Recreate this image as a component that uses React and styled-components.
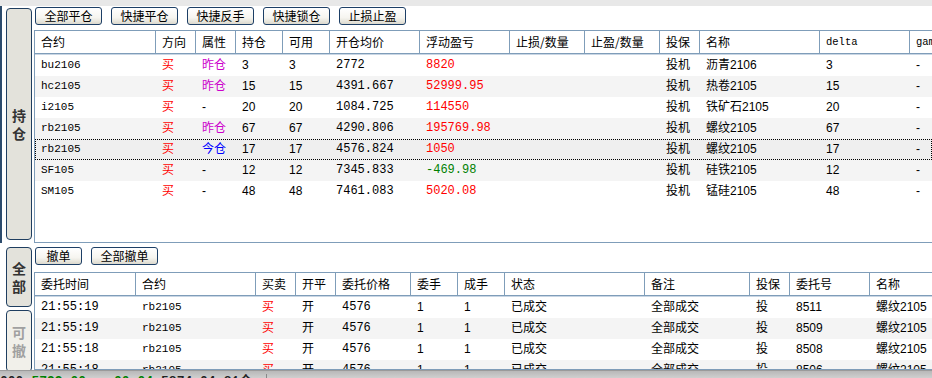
import styled, { createGlobalStyle } from "styled-components";

const GlobalStyle = createGlobalStyle`
  html, body { margin: 0; padding: 0; background: #fff; }
  body { font-family: "Liberation Sans", "Noto Sans CJK SC", sans-serif; font-size: 12px; color: #000; }
`

const Screen = styled.div`
  width: 932px;
  height: 378px;
  overflow: hidden;
  display: flex;
  flex-direction: column;
  background: #fff;
`
const TopStrip = styled.div`
  height: 6px;
  flex: none;
  background: #e8e8e8;
`
const Section = styled.div`
  display: flex;
  height: ${p => p.$h}px;
  flex: none;
  overflow: hidden;
`
const TabCol = styled.div`
  width: 34px;
  flex: none;
  box-sizing: border-box;
  display: flex;
  flex-direction: column;
  gap: 3px;
  padding: ${p => p.$pad};
  border-left: ${p => p.$edge ? "2px solid #2c4b6c" : "none"};
`
const Tab = styled.div`
  width: 26px;
  height: ${p => p.$h}px;
  flex: none;
  box-sizing: border-box;
  border: 1px solid #1f3e60;
  border-radius: 4px;
  background: ${p => p.$active ? "#e3e2db" : "#f1f0ea"};
  display: flex;
  flex-direction: column;
  align-items: center;
  justify-content: center;
  font-family: "Noto Sans CJK SC", sans-serif;
  font-weight: 700;
  font-size: 14px;
  line-height: 18px;
  color: ${p => p.$active ? "#333" : "#a0a0a0"};
`
const Panel = styled.div`
  flex: 1;
  min-width: 0;
  display: flex;
  flex-direction: column;
`
const Toolbar = styled.div`
  height: ${p => p.$h}px;
  flex: none;
  box-sizing: border-box;
  padding: ${p => p.$top}px 0 0 1px;
  display: flex;
  align-items: flex-start;
  gap: ${p => p.$gap}px;
`
const Btn = styled.button`
  width: ${p => p.$w}px;
  height: 18px;
  box-sizing: border-box;
  padding: 0;
  margin: 0;
  border: 1px solid #1d3f66;
  border-radius: 3px;
  background: linear-gradient(to bottom, #ffffff 0%, #f6f5f0 60%, #dcd9cd 100%);
  font-family: "Noto Sans CJK SC", sans-serif;
  font-size: 12px;
  line-height: 16px;
  color: #000;
`
const TableBox = styled.div`
  height: ${p => p.$h}px;
  flex: none;
  box-sizing: border-box;
  border: 1px solid #7f9db9;
  border-right: none;
  overflow: hidden;
  background: #fff;
`
const HeadRow = styled.div`
  display: flex;
  height: 22px;
  border-bottom: 1px solid #7f9db9;
  box-shadow: 0 1px 0 #c9d6e4;
  white-space: nowrap;
`
const HeadCell = styled.div`
  width: ${p => p.$w}px;
  flex: none;
  box-sizing: border-box;
  padding-left: 6px;
  border-right: 1px solid #7f9db9;
  line-height: 22px;
  overflow: hidden;
  font-family: ${p => p.$mono ? '"Liberation Mono", monospace' : '"Noto Sans CJK SC", sans-serif'};
  font-size: ${p => p.$mono ? "10.5px" : "12px"};
`
const Row = styled.div`
  display: flex;
  height: 21px;
  white-space: nowrap;
  background: ${p => p.$sel ? "#efefef" : p.$alt ? "#f4f4f4" : "#fff"};
  outline: ${p => p.$sel ? "1px dotted #000" : "none"};
  outline-offset: -1px;
  margin-top: ${p => p.$first ? "1px" : "0"};
`
const fonts = {
  code: '"Liberation Mono", monospace',
  mono: '"Liberation Mono", monospace',
  sans: '"Liberation Sans", "Noto Sans CJK SC", sans-serif',
}
const Cell = styled.div`
  width: ${p => p.$w}px;
  flex: none;
  box-sizing: border-box;
  padding-left: 6px;
  line-height: 21px;
  overflow: hidden;
  font-family: ${p => fonts[p.$kind || "sans"]};
  font-size: ${p => p.$kind === "code" ? "11px" : "12px"};
  color: ${p => p.$c || "#000"};
`
const StatusBar = styled.div`
  flex: 1;
  background: linear-gradient(to bottom, #b8b8b8, #cfcfcf);
  border-top: 1px solid #9a9a9a;
  overflow: hidden;
  display: flex;
  gap: 8px;
  padding: 3px 0 0 0;
  font-family: "Liberation Mono", "Noto Sans CJK SC", monospace;
  font-weight: 700;
  font-size: 13px;
  line-height: 16px;
  white-space: nowrap;
`
const StatusText = styled.span`
  color: ${p => p.$c || "#222"};
  margin-left: ${p => p.$ml || 0}px;
`
const StatusSep = styled.span`
  width: 1px;
  height: 10px;
  background: #888;
  margin-left: 6px;
`

const RED = "#ff0000"
const PURPLE = "#cc00cc"
const BLUE = "#0000ff"
const GREEN = "#008000"

const posCols = [
  { t: "合约", w: 121 },
  { t: "方向", w: 40 },
  { t: "属性", w: 40 },
  { t: "持仓", w: 47 },
  { t: "可用", w: 47 },
  { t: "开仓均价", w: 90 },
  { t: "浮动盈亏", w: 90 },
  { t: "止损/数量", w: 75 },
  { t: "止盈/数量", w: 75 },
  { t: "投保", w: 40 },
  { t: "名称", w: 120 },
  { t: "delta", w: 90, mono: true },
  { t: "gamma", w: 90, mono: true },
]

const positions = [
  ["bu2106", "昨仓", 3, "2772", "8820", "沥青2106"],
  ["hc2105", "昨仓", 15, "4391.667", "52999.95", "热卷2105"],
  ["i2105", "-", 20, "1084.725", "114550", "铁矿石2105"],
  ["rb2105", "昨仓", 67, "4290.806", "195769.98", "螺纹2105"],
  ["rb2105", "今仓", 17, "4576.824", "1050", "螺纹2105"],
  ["SF105", "-", 12, "7345.833", "-469.98", "硅铁2105"],
  ["SM105", "-", 48, "7461.083", "5020.08", "锰硅2105"],
]

const orderCols = [
  { t: "委托时间", w: 101 },
  { t: "合约", w: 120 },
  { t: "买卖", w: 40 },
  { t: "开平", w: 40 },
  { t: "委托价格", w: 75 },
  { t: "委手", w: 47 },
  { t: "成手", w: 47 },
  { t: "状态", w: 140 },
  { t: "备注", w: 105 },
  { t: "投保", w: 40 },
  { t: "委托号", w: 80 },
  { t: "名称", w: 90 },
]

const orders = [
  ["21:55:19", "8511"],
  ["21:55:19", "8509"],
  ["21:55:18", "8508"],
  ["21:55:18", "8506"],
]

const attrColor = a => a === "昨仓" ? PURPLE : a === "今仓" ? BLUE : "#000"

const App = () => {
  return (
    <Screen>
      <GlobalStyle />
      <TopStrip />

      <Section $h={237}>
        <TabCol $pad="2px 2px 0 4px" $edge>
          <Tab $h={232} $active>
            <span>持</span>
            <span>仓</span>
          </Tab>
        </TabCol>
        <Panel>
          <Toolbar $h={24} $top={1} $gap={9}>
            <Btn $w={67}>全部平仓</Btn>
            <Btn $w={67}>快捷平仓</Btn>
            <Btn $w={67}>快捷反手</Btn>
            <Btn $w={67}>快捷锁仓</Btn>
            <Btn $w={67}>止损止盈</Btn>
          </Toolbar>
          <TableBox $h={213}>
            <HeadRow>
              {posCols.map(c => <HeadCell key={c.t} $w={c.w} $mono={c.mono}>{c.t}</HeadCell>)}
            </HeadRow>
            {positions.map((p, i) => (
              <Row key={i} $alt={i % 2 === 1} $sel={i === 4} $first={i === 0}>
                <Cell $w={121} $kind="code">{p[0]}</Cell>
                <Cell $w={40} $c={RED}>买</Cell>
                <Cell $w={40} $c={attrColor(p[1])}>{p[1]}</Cell>
                <Cell $w={47}>{p[2]}</Cell>
                <Cell $w={47}>{p[2]}</Cell>
                <Cell $w={90} $kind="mono">{p[3]}</Cell>
                <Cell $w={90} $kind="mono" $c={p[4].startsWith("-") ? GREEN : RED}>{p[4]}</Cell>
                <Cell $w={75}></Cell>
                <Cell $w={75}></Cell>
                <Cell $w={40}>投机</Cell>
                <Cell $w={120}>{p[5]}</Cell>
                <Cell $w={90}>{p[2]}</Cell>
                <Cell $w={90}>-</Cell>
              </Row>
            ))}
          </TableBox>
        </Panel>
      </Section>

      <Section $h={127}>
        <TabCol $pad="4px 2px 0 6px">
          <Tab $h={60} $active>
            <span>全</span>
            <span>部</span>
          </Tab>
          <Tab $h={62}>
            <span>可</span>
            <span>撤</span>
          </Tab>
        </TabCol>
        <Panel>
          <Toolbar $h={29} $top={4} $gap={9}>
            <Btn $w={47}>撤单</Btn>
            <Btn $w={67}>全部撤单</Btn>
          </Toolbar>
          <TableBox $h={98}>
            <HeadRow>
              {orderCols.map(c => <HeadCell key={c.t + c.w} $w={c.w}>{c.t}</HeadCell>)}
            </HeadRow>
            {orders.map((o, i) => (
              <Row key={i} $alt={i % 2 === 1} $first={i === 0}>
                <Cell $w={101} $kind="mono">{o[0]}</Cell>
                <Cell $w={120} $kind="code">rb2105</Cell>
                <Cell $w={40} $c={RED}>买</Cell>
                <Cell $w={40}>开</Cell>
                <Cell $w={75} $kind="mono">4576</Cell>
                <Cell $w={47}>1</Cell>
                <Cell $w={47}>1</Cell>
                <Cell $w={140}>已成交</Cell>
                <Cell $w={105}>全部成交</Cell>
                <Cell $w={40}>投</Cell>
                <Cell $w={80}>{o[1]}</Cell>
                <Cell $w={90}>螺纹2105</Cell>
              </Row>
            ))}
          </TableBox>
        </Panel>
      </Section>

      <StatusBar>
        <StatusText>000</StatusText>
        <StatusText $c={GREEN}>5799.00</StatusText>
        <StatusText $c={GREEN} $ml={20}>00.04</StatusText>
        <StatusText>5874.04</StatusText>
        <StatusText>81仓</StatusText>
        <StatusSep />
      </StatusBar>
    </Screen>
  )
}

export default App
